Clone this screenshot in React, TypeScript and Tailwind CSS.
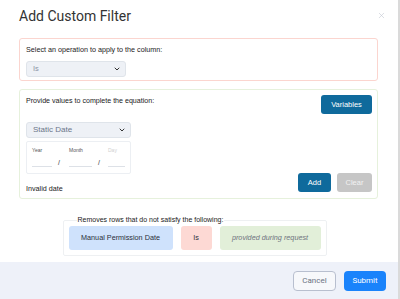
import { ChevronDown, X } from 'lucide-react';

const body = { fontFamily: '"Liberation Sans", Arial, sans-serif' };

function SelectBox({ label, className, textClass }: { label: string; className: string; textClass: string }) {
  return (
    <div
      className={`flex items-center justify-between rounded-[3px] border border-[#dfe4ea] bg-[#eef1f6] pl-[6px] pr-[4px] ${className}`}
    >
      <span className={textClass}>{label}</span>
      <ChevronDown className="h-[8px] w-[8px] text-[#333]" strokeWidth={3} />
    </div>
  );
}

function DateField({ label, width, muted }: { label: string; width: string; muted?: boolean }) {
  return (
    <div className="flex flex-col">
      <span className={`text-[5px] leading-[6px] ${muted ? 'text-[#d0d0d0]' : 'text-[#555]'}`}>{label}</span>
      <div className={`mt-[13px] h-px bg-[#dde1e7] ${width}`} />
    </div>
  );
}

export default function App() {
  return (
    <div className="flex h-[299px] w-[400px] overflow-hidden" style={body}>
      <div className="flex flex-1 flex-col bg-white">
        {/* Header */}
        <div className="flex items-start justify-between pl-[19px] pr-[12px] pt-[7px]">
          <h2 className="text-[14px] leading-[18px] text-[#333]" style={{ fontFamily: 'Roboto, sans-serif' }}>
            Add Custom Filter
          </h2>
          <X className="mt-[4px] h-[9px] w-[9px] text-[#bfc5ce]" strokeWidth={1.5} />
        </div>

        <div className="flex flex-col gap-[8px] px-[20px] pl-[19px] pt-[13px]">
          {/* Operation */}
          <div className="flex h-[43px] flex-col rounded-[3px] border border-[#fbd5cf] px-[6px] pt-[6px]">
            <p className="text-[7.2px] leading-[10px] text-[#1a1a1a]">Select an operation to apply to the column:</p>
            <SelectBox label="Is" className="mt-[6px] h-[16px] w-[100px]" textClass="text-[7.5px] text-[#8a94a6]" />
          </div>

          {/* Values */}
          <div className="flex h-[110px] flex-col rounded-[3px] border border-[#e6f1dc] px-[5px] pt-[5px] pb-[5px]">
            <div className="flex items-start justify-between">
              <p className="ml-px mt-[1px] text-[7.1px] leading-[10px] text-[#1a1a1a]">Provide values to complete the equation:</p>
              <button className="h-[19px] w-[51px] rounded-[3px] bg-[#0f6a9c] text-[7.5px] text-white">Variables</button>
            </div>
            <div className="mt-[8px] flex flex-1 items-end justify-between">
              <div className="ml-px flex flex-col">
                <SelectBox label="Static Date" className="h-[16px] w-[105px]" textClass="text-[8px] text-[#6b7689]" />
                <div className="mt-[3px] flex h-[33px] w-[105px] items-start rounded-[2px] border border-[#eceff3] pl-[5px] pt-[5px]">
                  <DateField label="Year" width="w-[20px]" />
                  <span className="mt-[12px] w-[17px] pl-[6px] text-[7px] leading-[7px] text-[#333]">/</span>
                  <DateField label="Month" width="w-[23px]" />
                  <span className="mt-[12px] w-[16px] pl-[6px] text-[7px] leading-[7px] text-[#333]">/</span>
                  <DateField label="Day" width="w-[17px]" muted />
                </div>
                <p className="mt-[10px] text-[7.2px] leading-[10px] text-[#1a1a1a]">Invalid date</p>
              </div>
              <div className="mb-[2px] flex gap-[6px]">
                <button className="h-[19px] w-[33px] rounded-[3px] bg-[#0f6a9c] text-[7.5px] text-white">Add</button>
                <button className="h-[19px] w-[35px] rounded-[3px] bg-[#c6c6c6] text-[7.5px] text-[#f2f2f2]">Clear</button>
              </div>
            </div>
          </div>

          {/* Summary */}
          <fieldset className="mx-auto mt-[9px] w-[264px] -translate-x-[4px] rounded-[2px] border border-[#eef0f2] px-[5px] pb-[5px] pt-0">
            <legend className="ml-[8px] px-[1px] text-[7px] leading-[8px] text-[#1a1a1a]">
              Removes rows that do not satisfy the following:
            </legend>
            <div className="mt-[2px] flex gap-[8px]">
              <div className="flex h-[24px] w-[104px] items-center justify-center rounded-[3px] bg-[#cfe2fc] text-[7.25px] font-medium text-[#2a2f3a]">
                Manual Permission Date
              </div>
              <div className="flex h-[24px] w-[31px] items-center justify-center rounded-[3px] bg-[#fdd9d4] text-[7.25px] font-medium text-[#2a2f3a]">
                Is
              </div>
              <div className="flex h-[24px] w-[101px] items-center justify-center rounded-[3px] bg-[#e2efd9] text-[7.25px] italic text-[#6f7480]">
                provided during request
              </div>
            </div>
          </fieldset>
        </div>

        {/* Footer */}
        <div
          className="mt-auto flex h-[37px] items-center justify-end gap-[8px] bg-[#eef1f9] pr-[12px]"
          style={{ fontFamily: 'Roboto, sans-serif' }}
        >
          <button className="h-[20px] w-[43px] rounded-[4px] border border-[#b8bfcf] bg-[#f7f8fb] text-[8px] text-[#6b7282]">
            Cancel
          </button>
          <button className="h-[20px] w-[42px] rounded-[4px] bg-[#1a83fb] text-[8px] text-white">Submit</button>
        </div>
      </div>
      <div className="w-[2px] bg-[#dadada]" />
    </div>
  );
}
